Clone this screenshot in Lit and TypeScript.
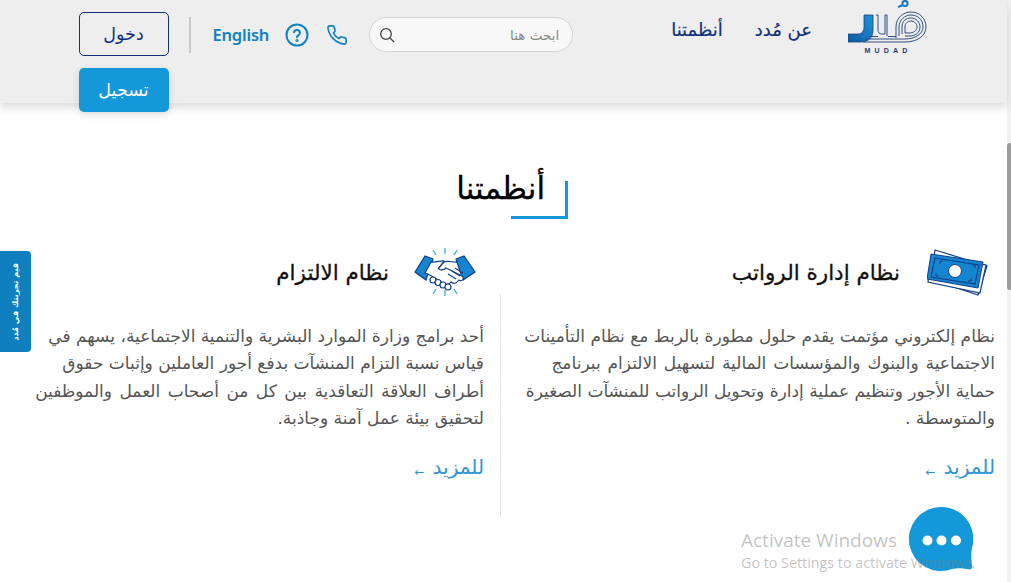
import { LitElement, html, css, svg } from "lit";
import { customElement } from "lit/decorators.js";

const logo = svg`<svg class="logo" width="80" height="54" viewBox="0 0 80 54" fill="none">
  <defs><linearGradient id="g" x1="0" x2="1" y1="1" y2="0"><stop offset="0" stop-color="#0d5aa0"/><stop offset="1" stop-color="#1f93dc"/></linearGradient></defs>
  <path d="M0 34h10c4 0 6-3 6-7V15h9v15c0 8-5 12-12 12H0z" fill="url(#g)" stroke="#16407f" stroke-width=".8"/>
  <g stroke="#2f4f85" stroke-width="1" fill="none">
    <path d="M28 15h2v15c0 2 1 4 4 4h3V15h2v21"/>
    <path d="M15 42h42c12 0 21-6 21-15 0-9-7-15-15-15s-15 6-15 15v11"/>
    <path d="M18 39h39c10 0 18-5 18-12 0-8-6-12-12-12s-12 5-12 12v9"/>
    <path d="M21 36.500h9M40 36.500h8M54 34v-7c0-6 4-9 9-9s9 4 9 9c0 6-5 9-11 9h-4"/>
    <path d="M57 33v-6c0-4 3-6 6-6s6 2 6 6-4 6-8 6z"/>
  </g>
  <path d="M50 7l5-2" stroke="#1f78c1" stroke-width="2"/><circle cx="57" cy="3.500" r="2.600" fill="none" stroke="#1f78c1" stroke-width="2"/>
  <text x="40" y="53" text-anchor="middle" font-family="Liberation Sans, sans-serif" font-size="7" font-weight="700" letter-spacing="4.200" fill="#27406f">MUDAD</text>
</svg>`;

const money = svg`<svg width="62" height="50" viewBox="0 0 62 50" fill="none">
  <path d="M8 3l52 16-9 29L4 32z" fill="#fff" stroke="#123f86" stroke-width="1.200"/>
  <path d="M5 8l54 10-6 28L1 35z" fill="#fff" stroke="#123f86" stroke-width="1.200"/>
  <path d="M4 7l52 8-5 26L0 32z" fill="#1585d0" stroke="#123f86" stroke-width="1"/>
  <path d="M8 11l44 7-4 19-44-7z" stroke="#123f86" stroke-width="1.200"/>
  <circle cx="28" cy="24" r="6.500" fill="#fff" stroke="#123f86"/>
  <path d="M13 17v-3h3M45 18h3v3M9 26v3h3M41 34h3v-3" stroke="#123f86" stroke-width="1"/>
</svg>`;

const shake = svg`<svg width="62" height="50" viewBox="0 0 62 50" fill="none">
  <g stroke="#35aee8" stroke-width="1.300"><path d="M31 1v6M19 3l3 5M43 3l-3 5M31 43v6M19 47l3-5M43 47l-3-5"/></g>
  <path d="M1 25L11 9l8 3-7 21z" fill="#1585d0" stroke="#123f86" stroke-width="1.200"/>
  <path d="M61 25L50 9l-8 3 7 21z" fill="#1585d0" stroke="#123f86" stroke-width="1.200"/>
  <g stroke="#123f86" stroke-width="1.200" fill="#fff">
    <path d="M17 15c6 1 9-2 13-1l-5 7c0 3 5 2 7 0l16 8c3 2 0 6-3 4-3 4-6 4-8 2-2 3-6 3-8 1l-15-9-3-1z"/>
    <path d="M44 15c-5 1-9-2-14 0l-6 7M34 27l8 5M38 24l8 5M41 21l8 5"/>
    <circle cx="19" cy="33" r="3"/><circle cx="24" cy="35.500" r="3"/><circle cx="29" cy="38" r="3"/><circle cx="34" cy="40" r="3"/>
  </g>
</svg>`;

@customElement("app-root")
export class AppRoot extends LitElement {
  static styles = css`
    :host { display: block; width: 1011px; height: 582px; overflow: hidden; position: relative; background: #fff;
      font-family: "DejaVu Sans", "Liberation Sans", sans-serif; }
    * { box-sizing: border-box; }
    .page { display: flex; flex-direction: column; width: 1007px; height: 582px; direction: rtl; }
    header { height: 103px; background: #eeeeee; box-shadow: 0 5px 8px rgba(0,0,0,.13); display: flex; align-items: flex-start;
      padding: 0 79px 0 0; flex: none; position: relative; z-index: 1; }
    .logo { flex: none; }
    nav { display: flex; gap: 32px; margin: 18px 36px 0 0; color: #14307a; font-size: 18px; flex: none; line-height: 24px; -webkit-text-stroke: .2px #14307a; white-space: nowrap; }
    .search { display: flex; align-items: center; justify-content: space-between; width: 204px; height: 35px; border-radius: 18px; border: 1px solid #d0d3d8;
      background: #f8f8f8; margin: 17px 98px 0 0; padding: 0 13px 0 9px; color: #888; font-size: 13.5px; flex: none; }
    .tools { display: flex; align-items: center; height: 35px; margin: 17px 21px 0 0; color: #0f82c3; flex: none; }
    .tools svg { flex: none; }
    .q { margin: 0 17px 0 16px; }
    .en { font-family: "Noto Sans", sans-serif; font-weight: 600; font-size: 16.5px; letter-spacing: -.2px; }
    .sep { width: 2px; height: 36px; background: #c9c9c9; margin-right: 22px; }
    .btns { display: flex; flex-direction: column; gap: 12px; margin: 12px 20px 0 0; width: 90px; flex: none; }
    .btn { height: 44px; border-radius: 5px; display: flex; align-items: center; justify-content: center; font-size: 17.5px; }
    .login { border: 1px solid #14307a; color: #14307a; }
    .reg { background: #1598da; color: #fff; box-shadow: 0 3px 8px rgba(0,0,0,.12); }
    main { flex: 1; display: flex; flex-direction: column; }
    .title { align-self: center; margin: 65px 0 0 17px; height: 50px; position: relative; width: 112px; padding-right: 23px; font-size: 31px; color: #000; line-height: 40px; display: flex; white-space: nowrap; -webkit-text-stroke: .3px #000; }
    .corner { position: absolute; right: 0; top: 13px; width: 57px; height: 38px; border-right: 3px solid #1598da; border-bottom: 3px solid #1598da; }
    .cols { display: flex; margin-top: 32px; padding: 0 12px 0 0; }
    .col { display: flex; flex-direction: column; }
    .first { flex: none; width: 494px; }
    .second { flex: 1; }
    .head { display: flex; align-items: center; height: 44px; gap: 27px; font-size: 21.5px; color: #111; -webkit-text-stroke: .3px #111; white-space: nowrap; }
    .first .head { padding-right: 6px; }
    .second .head { padding-right: 25px; gap: 25px; }
    .body { height: 223px; padding-top: 29px; }
    .second .body { border-right: 1px solid #e3e3e3; padding-right: 16px; }
    .text { font-size: 17px; line-height: 27.3px; color: #555; white-space: nowrap; }
    .w1 { word-spacing: 1.5px; }
    .w2 { word-spacing: 2px; }
    .more { margin-top: 21px; color: #2e95d3; font-size: 20px; line-height: 28px; display: flex; align-items: center; gap: 8px; }
    .more i { font-style: normal; font-size: 12px; line-height: 12px; margin-top: 9px; font-family: "DejaVu Sans", sans-serif; }
    .side { position: absolute; left: 0; top: 251px; width: 31px; height: 101px; background: #0f7fbd; border-radius: 0 4px 4px 0; color: #fff;
      display: flex; align-items: center; justify-content: center; }
    .side span { writing-mode: vertical-rl; transform: rotate(180deg); font-size: 8px; font-weight: 700; white-space: nowrap; direction: rtl; }
    .bar { position: absolute; right: 0; top: 0; bottom: 0; width: 4px; background: #f1f1f1; }
    .bar b { position: absolute; left: 0; right: 0; top: 143px; height: 147px; background: #9b9b9b; border-radius: 3px 0 0 3px; display: block; }
    .wm { position: absolute; left: 741px; top: 527px; color: rgba(120,120,120,.45); font-family: "Open Sans", sans-serif; direction: ltr; white-space: nowrap; z-index: 3; }
    .wm div:first-child { font-size: 19px; line-height: 26px; }
    .wm div:last-child { font-size: 14.3px; line-height: 20px; }
    .chat { position: absolute; left: 909px; top: 507px; width: 64px; height: 64px; z-index: 2; }
  `;

  render() {
    return html`
      <div class="page">
        <header>
          ${logo}
          <nav><span>عن مُدد</span><span>أنظمتنا</span></nav>
          <div class="search">
            <span>ابحث هنا</span>
            <svg width="16" height="16" viewBox="0 0 16 16" fill="none" stroke="#444" stroke-width="1.300"><circle cx="7" cy="7" r="5.300"/><path d="M11 11l4 4"/></svg>
          </div>
          <div class="tools">
            <svg width="22" height="22" viewBox="0 0 24 24" fill="none" stroke="#0f82c3" stroke-width="1.800" stroke-linejoin="round"><path d="M22 16.900v3a2 2 0 0 1-2.200 2 19.800 19.800 0 0 1-8.600-3.100 19.500 19.500 0 0 1-6-6 19.800 19.800 0 0 1-3.100-8.700A2 2 0 0 1 4.100 2h3a2 2 0 0 1 2 1.700c.1 1 .4 1.900.7 2.800a2 2 0 0 1-.5 2.100L8.100 9.900a16 16 0 0 0 6 6l1.300-1.300a2 2 0 0 1 2.100-.4c.9.3 1.800.6 2.800.7a2 2 0 0 1 1.700 2z"/></svg>
            <svg class="q" width="24" height="24" viewBox="0 0 24 24" fill="none" stroke="#0f82c3" stroke-width="2"><circle cx="12" cy="12" r="10.500"/><path d="M9 9.200a3 3 0 0 1 5.900.8c0 2-3 2.600-3 4.200" stroke-linecap="round"/><circle cx="12" cy="17.500" r=".6"/></svg>
            <span class="en">English</span>
            <span class="sep"></span>
          </div>
          <div class="btns">
            <div class="btn login">دخول</div>
            <div class="btn reg">تسجيل</div>
          </div>
        </header>
        <main>
          <div class="title"><span>أنظمتنا</span><span class="corner"></span></div>
          <div class="cols">
            <section class="col first">
              <div class="head">${money}<span>نظام إدارة الرواتب</span></div>
              <div class="body">
                <div class="text">
                  <div>نظام إلكتروني مؤتمت يقدم حلول مطورة بالربط مع نظام التأمينات</div>
                  <div class="w1">الاجتماعية والبنوك والمؤسسات المالية لتسهيل الالتزام ببرنامج</div>
                  <div>حماية الأجور وتنظيم عملية إدارة وتحويل الرواتب للمنشآت الصغيرة</div>
                  <div>والمتوسطة .</div>
                </div>
                <div class="more"><span>للمزيد</span><i>←</i></div>
              </div>
            </section>
            <section class="col second">
              <div class="head">${shake}<span>نظام الالتزام</span></div>
              <div class="body">
                <div class="text">
                  <div>أحد برامج وزارة الموارد البشرية والتنمية الاجتماعية، يسهم في</div>
                  <div>قياس نسبة التزام المنشآت بدفع أجور العاملين وإثبات حقوق</div>
                  <div class="w2">أطراف العلاقة التعاقدية بين كل من أصحاب العمل والموظفين</div>
                  <div>لتحقيق بيئة عمل آمنة وجاذبة.</div>
                </div>
                <div class="more"><span>للمزيد</span><i>←</i></div>
              </div>
            </section>
          </div>
        </main>
      </div>
      <div class="side"><span>قيم تجربتك في مُدد</span></div>
      <div class="bar"><b></b></div>
      <div class="chat">
        <svg width="64" height="64" viewBox="0 0 64 64">
          <path d="M32 0a32 32 0 0 1 31 41c-1 5-1 10 0 17 1 4-1 5-5 4-6-1-10-1-15 0A32 32 0 1 1 32 0z" fill="#1598da"/>
          <circle cx="18.500" cy="33.500" r="5" fill="#fff"/><circle cx="32.500" cy="33.500" r="5" fill="#fff"/><circle cx="47" cy="33.500" r="5" fill="#fff"/>
        </svg>
      </div>
      <div class="wm"><div>Activate Windows</div><div>Go to Settings to activate Windows.</div></div>
    `;
  }
}
